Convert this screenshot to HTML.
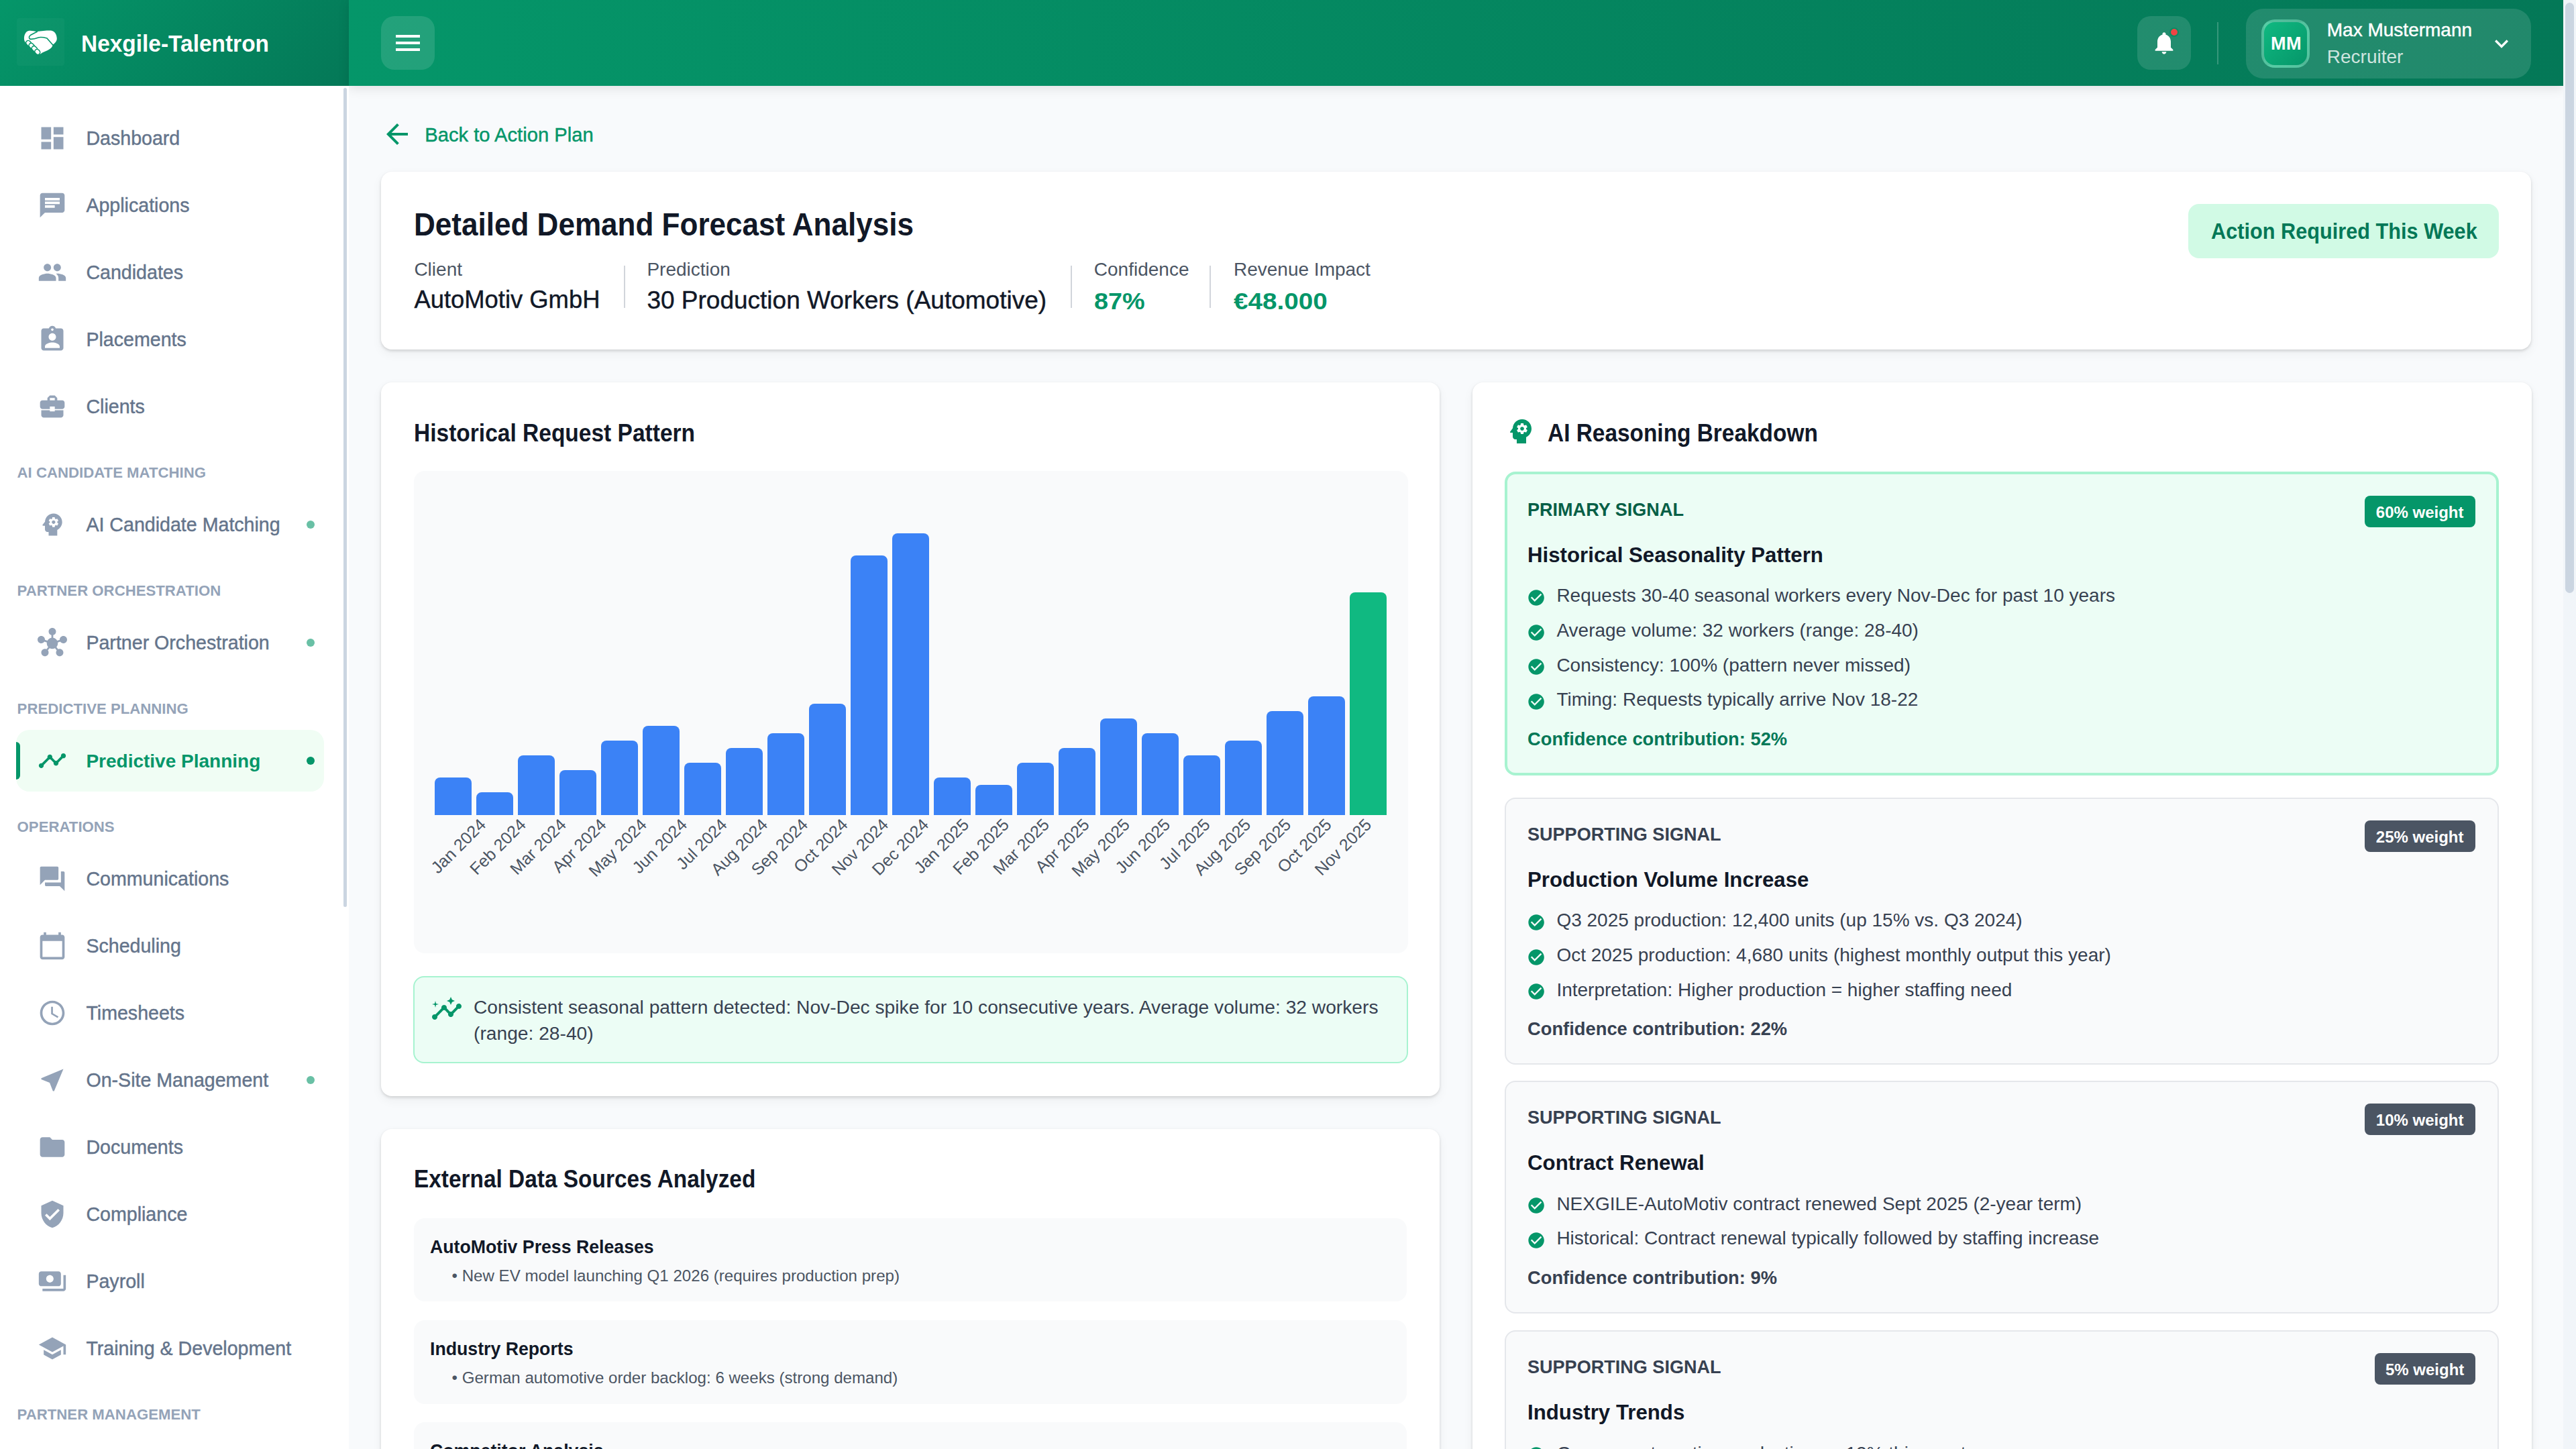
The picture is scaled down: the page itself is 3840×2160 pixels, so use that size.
<!DOCTYPE html>
<html><head><meta charset="utf-8"><title>Detailed Demand Forecast Analysis</title>
<style>
@media (min-width:2800px){html{zoom:2}}
html,body{margin:0;padding:0;overflow:hidden}
body{width:1920px;height:1080px;overflow:hidden;position:relative;background:#f8fafc;font-family:"Liberation Sans",sans-serif}
.a{position:absolute}
.t{position:absolute;white-space:nowrap;line-height:1}
</style></head><body>

<svg class="a" style="left:284.20px;top:88.00px;width:24px;height:24px;" viewBox="0 0 24 24" fill="#059669"><path d="M20 11H7.83l5.59-5.59L12 4l-8 8 8 8 1.41-1.41L7.83 13H20v-2z"/></svg>
<div class="t" style="left:316.60px;top:93.54px;font-size:14.6px;font-weight:400;color:#059669;-webkit-text-stroke:0.22px currentColor;">Back to Action Plan</div>
<div class="a" style="left:284.00px;top:128.00px;width:1602.30px;height:132.30px;background:#fff;border-radius:8px;box-shadow:0 1px 2px rgba(0,0,0,0.14),0 3px 8px rgba(0,0,0,0.05)"></div>
<div class="t" style="left:308.70px;top:155.68px;font-size:24px;font-weight:700;color:#111827;transform:scaleX(0.9176);transform-origin:0 0;">Detailed Demand Forecast Analysis</div>
<div class="t" style="left:308.70px;top:193.85px;font-size:14px;font-weight:400;color:#4b5563;">Client</div>
<div class="t" style="left:308.70px;top:214.69px;font-size:18.2px;font-weight:400;color:#111827;-webkit-text-stroke:0.22px currentColor;">AutoMotiv GmbH</div>
<div class="a" style="left:465.00px;top:197.80px;width:1.00px;height:31.60px;background:#d1d5db"></div>
<div class="t" style="left:482.20px;top:193.85px;font-size:14px;font-weight:400;color:#4b5563;">Prediction</div>
<div class="t" style="left:482.20px;top:214.44px;font-size:18.5px;font-weight:400;color:#111827;-webkit-text-stroke:0.22px currentColor;">30 Production Workers (Automotive)</div>
<div class="a" style="left:798.00px;top:197.80px;width:1.00px;height:31.60px;background:#d1d5db"></div>
<div class="t" style="left:815.40px;top:193.85px;font-size:14px;font-weight:400;color:#4b5563;">Confidence</div>
<div class="t" style="left:815.40px;top:215.84px;font-size:17.2px;font-weight:700;color:#059669;transform:scaleX(1.1);transform-origin:0 0;">87%</div>
<div class="a" style="left:901.50px;top:197.80px;width:1.00px;height:31.60px;background:#d1d5db"></div>
<div class="t" style="left:919.50px;top:193.85px;font-size:14px;font-weight:400;color:#4b5563;">Revenue Impact</div>
<div class="t" style="left:919.50px;top:215.84px;font-size:17.2px;font-weight:700;color:#059669;transform:scaleX(1.125);transform-origin:0 0;">€48.000</div>
<div class="a" style="left:1631.00px;top:152.00px;width:231.40px;height:40.30px;background:#d1fae5;border-radius:8px"></div>
<div class="t" style="left:1647.80px;top:163.61px;font-size:17px;font-weight:700;color:#047857;transform:scaleX(0.9026);transform-origin:0 0;">Action Required This Week</div>
<div class="a" style="left:284.00px;top:285.00px;width:789.00px;height:532.00px;background:#fff;border-radius:8px;box-shadow:0 1px 2px rgba(0,0,0,0.14),0 3px 8px rgba(0,0,0,0.05)"></div>
<div class="t" style="left:308.50px;top:313.76px;font-size:18px;font-weight:700;color:#111827;transform:scaleX(0.931);transform-origin:0 0;">Historical Request Pattern</div>
<div class="a" style="left:308.50px;top:351.00px;width:740.75px;height:359.50px;background:#f9fafb;border-radius:8px"></div>
<div class="a" style="left:324.00px;top:579.70px;width:27.25px;height:27.60px;background:#3b82f6;border-radius:4px 4px 0 0"></div>
<div class="a" style="left:355.01px;top:590.74px;width:27.25px;height:16.56px;background:#3b82f6;border-radius:4px 4px 0 0"></div>
<div class="a" style="left:386.02px;top:563.14px;width:27.25px;height:44.16px;background:#3b82f6;border-radius:4px 4px 0 0"></div>
<div class="a" style="left:417.03px;top:574.18px;width:27.25px;height:33.12px;background:#3b82f6;border-radius:4px 4px 0 0"></div>
<div class="a" style="left:448.04px;top:552.10px;width:27.25px;height:55.20px;background:#3b82f6;border-radius:4px 4px 0 0"></div>
<div class="a" style="left:479.05px;top:541.06px;width:27.25px;height:66.24px;background:#3b82f6;border-radius:4px 4px 0 0"></div>
<div class="a" style="left:510.06px;top:568.66px;width:27.25px;height:38.64px;background:#3b82f6;border-radius:4px 4px 0 0"></div>
<div class="a" style="left:541.07px;top:557.62px;width:27.25px;height:49.68px;background:#3b82f6;border-radius:4px 4px 0 0"></div>
<div class="a" style="left:572.08px;top:546.58px;width:27.25px;height:60.72px;background:#3b82f6;border-radius:4px 4px 0 0"></div>
<div class="a" style="left:603.09px;top:524.50px;width:27.25px;height:82.80px;background:#3b82f6;border-radius:4px 4px 0 0"></div>
<div class="a" style="left:634.10px;top:414.10px;width:27.25px;height:193.20px;background:#3b82f6;border-radius:4px 4px 0 0"></div>
<div class="a" style="left:665.11px;top:397.54px;width:27.25px;height:209.76px;background:#3b82f6;border-radius:4px 4px 0 0"></div>
<div class="a" style="left:696.12px;top:579.70px;width:27.25px;height:27.60px;background:#3b82f6;border-radius:4px 4px 0 0"></div>
<div class="a" style="left:727.13px;top:585.22px;width:27.25px;height:22.08px;background:#3b82f6;border-radius:4px 4px 0 0"></div>
<div class="a" style="left:758.14px;top:568.66px;width:27.25px;height:38.64px;background:#3b82f6;border-radius:4px 4px 0 0"></div>
<div class="a" style="left:789.15px;top:557.62px;width:27.25px;height:49.68px;background:#3b82f6;border-radius:4px 4px 0 0"></div>
<div class="a" style="left:820.16px;top:535.54px;width:27.25px;height:71.76px;background:#3b82f6;border-radius:4px 4px 0 0"></div>
<div class="a" style="left:851.17px;top:546.58px;width:27.25px;height:60.72px;background:#3b82f6;border-radius:4px 4px 0 0"></div>
<div class="a" style="left:882.18px;top:563.14px;width:27.25px;height:44.16px;background:#3b82f6;border-radius:4px 4px 0 0"></div>
<div class="a" style="left:913.19px;top:552.10px;width:27.25px;height:55.20px;background:#3b82f6;border-radius:4px 4px 0 0"></div>
<div class="a" style="left:944.20px;top:530.02px;width:27.25px;height:77.28px;background:#3b82f6;border-radius:4px 4px 0 0"></div>
<div class="a" style="left:975.21px;top:518.98px;width:27.25px;height:88.32px;background:#3b82f6;border-radius:4px 4px 0 0"></div>
<div class="a" style="left:1006.22px;top:441.70px;width:27.25px;height:165.60px;background:#10b981;border-radius:4px 4px 0 0"></div>
<div class="t lab" style="right:1564.80px;top:607.9px;font-size:12.5px;color:#4b5563;transform:rotate(-45deg);transform-origin:100% 0">Jan 2024</div>
<div class="t lab" style="right:1534.79px;top:607.9px;font-size:12.5px;color:#4b5563;transform:rotate(-45deg);transform-origin:100% 0">Feb 2024</div>
<div class="t lab" style="right:1504.77px;top:607.9px;font-size:12.5px;color:#4b5563;transform:rotate(-45deg);transform-origin:100% 0">Mar 2024</div>
<div class="t lab" style="right:1474.76px;top:607.9px;font-size:12.5px;color:#4b5563;transform:rotate(-45deg);transform-origin:100% 0">Apr 2024</div>
<div class="t lab" style="right:1444.74px;top:607.9px;font-size:12.5px;color:#4b5563;transform:rotate(-45deg);transform-origin:100% 0">May 2024</div>
<div class="t lab" style="right:1414.72px;top:607.9px;font-size:12.5px;color:#4b5563;transform:rotate(-45deg);transform-origin:100% 0">Jun 2024</div>
<div class="t lab" style="right:1384.71px;top:607.9px;font-size:12.5px;color:#4b5563;transform:rotate(-45deg);transform-origin:100% 0">Jul 2024</div>
<div class="t lab" style="right:1354.69px;top:607.9px;font-size:12.5px;color:#4b5563;transform:rotate(-45deg);transform-origin:100% 0">Aug 2024</div>
<div class="t lab" style="right:1324.68px;top:607.9px;font-size:12.5px;color:#4b5563;transform:rotate(-45deg);transform-origin:100% 0">Sep 2024</div>
<div class="t lab" style="right:1294.66px;top:607.9px;font-size:12.5px;color:#4b5563;transform:rotate(-45deg);transform-origin:100% 0">Oct 2024</div>
<div class="t lab" style="right:1264.65px;top:607.9px;font-size:12.5px;color:#4b5563;transform:rotate(-45deg);transform-origin:100% 0">Nov 2024</div>
<div class="t lab" style="right:1234.63px;top:607.9px;font-size:12.5px;color:#4b5563;transform:rotate(-45deg);transform-origin:100% 0">Dec 2024</div>
<div class="t lab" style="right:1204.62px;top:607.9px;font-size:12.5px;color:#4b5563;transform:rotate(-45deg);transform-origin:100% 0">Jan 2025</div>
<div class="t lab" style="right:1174.61px;top:607.9px;font-size:12.5px;color:#4b5563;transform:rotate(-45deg);transform-origin:100% 0">Feb 2025</div>
<div class="t lab" style="right:1144.59px;top:607.9px;font-size:12.5px;color:#4b5563;transform:rotate(-45deg);transform-origin:100% 0">Mar 2025</div>
<div class="t lab" style="right:1114.58px;top:607.9px;font-size:12.5px;color:#4b5563;transform:rotate(-45deg);transform-origin:100% 0">Apr 2025</div>
<div class="t lab" style="right:1084.56px;top:607.9px;font-size:12.5px;color:#4b5563;transform:rotate(-45deg);transform-origin:100% 0">May 2025</div>
<div class="t lab" style="right:1054.55px;top:607.9px;font-size:12.5px;color:#4b5563;transform:rotate(-45deg);transform-origin:100% 0">Jun 2025</div>
<div class="t lab" style="right:1024.53px;top:607.9px;font-size:12.5px;color:#4b5563;transform:rotate(-45deg);transform-origin:100% 0">Jul 2025</div>
<div class="t lab" style="right:994.52px;top:607.9px;font-size:12.5px;color:#4b5563;transform:rotate(-45deg);transform-origin:100% 0">Aug 2025</div>
<div class="t lab" style="right:964.50px;top:607.9px;font-size:12.5px;color:#4b5563;transform:rotate(-45deg);transform-origin:100% 0">Sep 2025</div>
<div class="t lab" style="right:934.48px;top:607.9px;font-size:12.5px;color:#4b5563;transform:rotate(-45deg);transform-origin:100% 0">Oct 2025</div>
<div class="t lab" style="right:904.47px;top:607.9px;font-size:12.5px;color:#4b5563;transform:rotate(-45deg);transform-origin:100% 0">Nov 2025</div>
<div class="a" style="left:308.20px;top:727.30px;width:741.30px;height:65.10px;background:#ecfdf5;border:1px solid #a7f3d0;border-radius:8px;box-sizing:border-box"></div>
<svg class="a" style="left:320.80px;top:740.00px;width:24px;height:24px;" viewBox="0 0 24 24" fill="#059669"><path d="M21 8c-1.45 0-2.26 1.44-1.93 2.51l-3.55 3.56c-.3-.09-.74-.09-1.04 0l-2.55-2.55C12.27 10.45 11.46 9 10 9c-1.45 0-2.27 1.44-1.93 2.52l-4.56 4.55C2.44 15.74 1 16.55 1 18c0 1.1.9 2 2 2 1.45 0 2.26-1.44 1.93-2.51l4.55-4.56c.3.09.74.09 1.04 0l2.55 2.55C12.73 16.55 13.54 18 15 18c1.45 0 2.27-1.44 1.93-2.52l3.56-3.55c1.07.33 2.51-.48 2.51-1.93 0-1.1-.9-2-2-2z"/><path d="M15 9l.94-2.07L18 6l-2.06-.93L15 3l-.92 2.07L12 6l2.08.93z"/><path d="M3.5 11L4 9l2-.5L4 8l-.5-2L3 8l-2 .5L3 9z"/></svg>
<div class="t" style="left:353.00px;top:743.46px;font-size:14.1px;font-weight:400;color:#374151;">Consistent seasonal pattern detected: Nov-Dec spike for 10 consecutive years. Average volume: 32 workers</div>
<div class="t" style="left:353.00px;top:763.16px;font-size:14.1px;font-weight:400;color:#374151;">(range: 28-40)</div>
<div class="a" style="left:284.00px;top:841.30px;width:789.00px;height:558.70px;background:#fff;border-radius:8px;box-shadow:0 1px 2px rgba(0,0,0,0.14),0 3px 8px rgba(0,0,0,0.05)"></div>
<div class="t" style="left:308.60px;top:870.16px;font-size:18px;font-weight:700;color:#111827;transform:scaleX(0.928);transform-origin:0 0;">External Data Sources Analyzed</div>
<div class="a" style="left:308.60px;top:907.80px;width:740.00px;height:62.40px;background:#f9fafb;border-radius:8px"></div>
<div class="t" style="left:320.40px;top:922.35px;font-size:14px;font-weight:700;color:#111827;transform:scaleX(0.953);transform-origin:0 0;">AutoMotiv Press Releases</div>
<div class="t" style="left:336.80px;top:945.10px;font-size:12.05px;font-weight:400;color:#4b5563;">&bull; New EV model launching Q1 2026 (requires production prep)</div>
<div class="a" style="left:308.60px;top:983.90px;width:740.00px;height:62.40px;background:#f9fafb;border-radius:8px"></div>
<div class="t" style="left:320.40px;top:998.45px;font-size:14px;font-weight:700;color:#111827;transform:scaleX(0.953);transform-origin:0 0;">Industry Reports</div>
<div class="t" style="left:336.80px;top:1021.20px;font-size:12.05px;font-weight:400;color:#4b5563;">&bull; German automotive order backlog: 6 weeks (strong demand)</div>
<div class="a" style="left:308.60px;top:1060.00px;width:740.00px;height:62.40px;background:#f9fafb;border-radius:8px"></div>
<div class="t" style="left:320.40px;top:1074.55px;font-size:14px;font-weight:700;color:#111827;transform:scaleX(0.953);transform-origin:0 0;">Competitor Analysis</div>
<div class="t" style="left:336.80px;top:1097.30px;font-size:12.05px;font-weight:400;color:#4b5563;">&bull; Competitor staffing agencies report high demand</div>
<div class="a" style="left:1097.60px;top:285.00px;width:789.40px;height:1115.00px;background:#fff;border-radius:8px;box-shadow:0 1px 2px rgba(0,0,0,0.14),0 3px 8px rgba(0,0,0,0.05)"></div>
<svg class="a" style="left:1121.30px;top:309.30px;width:24px;height:24px;" viewBox="0 0 24 24" fill="#059669"><path d="M13 8.57c-.79 0-1.43.64-1.43 1.43s.64 1.43 1.43 1.43 1.43-.64 1.43-1.43-.64-1.43-1.43-1.43z"/><path d="M13 3C9.25 3 6.2 5.94 6.02 9.64L4.1 12.2c-.25.33-.01.8.4.8H6v3c0 1.1.9 2 2 2h1v3h7v-4.68c2.36-1.12 4-3.530 4-6.32 0-3.87-3.13-7-7-7zm3 7c0 .13-.01.26-.02.39l.83.66c.08.06.1.16.05.25l-.8 1.39c-.05.09-.16.12-.24.09l-.99-.4c-.21.16-.43.29-.67.39L14 13.83c-.01.1-.1.17-.2.17h-1.6c-.1 0-.18-.07-.2-.17l-.15-1.06c-.25-.1-.47-.23-.68-.39l-.99.4c-.09.03-.2 0-.25-.09l-.8-1.39c-.05-.08-.03-.19.05-.25l.84-.66c-.01-.13-.02-.26-.02-.39s.02-.27.04-.39l-.85-.66c-.08-.06-.1-.16-.05-.26l.8-1.38c.05-.09.15-.12.24-.09l1 .4c.2-.15.43-.29.67-.39L12 6.17c.02-.1.1-.17.2-.17h1.6c.1 0 .18.07.2.17l.15 1.06c.24.1.46.23.67.39l1-.4c.09-.03.2 0 .24.09l.8 1.38c.05.09.03.2-.05.26l-.85.66c.03.12.04.25.04.39z"/></svg>
<div class="t" style="left:1153.70px;top:314.06px;font-size:18px;font-weight:700;color:#111827;transform:scaleX(0.928);transform-origin:0 0;">AI Reasoning Breakdown</div>
<div class="a" style="left:1121.70px;top:351.50px;width:740.70px;height:226.70px;background:#ecfdf5;border:2px solid #a7f3d0;border-radius:8px;box-sizing:border-box"></div>
<div class="t" style="left:1138.50px;top:373.05px;font-size:14px;font-weight:700;color:#065f46;transform:scaleX(0.966);transform-origin:0 0;">PRIMARY SIGNAL</div>
<div class="a" style="left:1762.70px;top:369.40px;width:82.30px;height:23.50px;background:#059669;border-radius:4px"></div>
<div class="t" style="left:1770.90px;top:375.84px;font-size:12px;font-weight:700;color:#fff;">60% weight</div>
<div class="t" style="left:1138.50px;top:405.56px;font-size:16px;font-weight:700;color:#111827;transform:scaleX(0.976);transform-origin:0 0;">Historical Seasonality Pattern</div>
<svg class="a" style="left:1138.15px;top:438.45px;width:14.1px;height:14.1px;" viewBox="0 0 24 24" fill="#059669"><path d="M12 2C6.48 2 2 6.48 2 12s4.48 10 10 10 10-4.48 10-10S17.52 2 12 2zm-2 15l-5-5 1.41-1.41L10 14.17l7.59-7.59L19 8l-9 9z"/></svg>
<div class="t" style="left:1160.20px;top:437.15px;font-size:14px;font-weight:400;color:#374151;">Requests 30-40 seasonal workers every Nov-Dec for past 10 years</div>
<svg class="a" style="left:1138.15px;top:464.25px;width:14.1px;height:14.1px;" viewBox="0 0 24 24" fill="#059669"><path d="M12 2C6.48 2 2 6.48 2 12s4.48 10 10 10 10-4.48 10-10S17.52 2 12 2zm-2 15l-5-5 1.41-1.41L10 14.17l7.59-7.59L19 8l-9 9z"/></svg>
<div class="t" style="left:1160.20px;top:462.95px;font-size:14px;font-weight:400;color:#374151;">Average volume: 32 workers (range: 28-40)</div>
<svg class="a" style="left:1138.15px;top:490.05px;width:14.1px;height:14.1px;" viewBox="0 0 24 24" fill="#059669"><path d="M12 2C6.48 2 2 6.48 2 12s4.48 10 10 10 10-4.48 10-10S17.52 2 12 2zm-2 15l-5-5 1.41-1.41L10 14.17l7.59-7.59L19 8l-9 9z"/></svg>
<div class="t" style="left:1160.20px;top:488.75px;font-size:14px;font-weight:400;color:#374151;">Consistency: 100% (pattern never missed)</div>
<svg class="a" style="left:1138.15px;top:515.85px;width:14.1px;height:14.1px;" viewBox="0 0 24 24" fill="#059669"><path d="M12 2C6.48 2 2 6.48 2 12s4.48 10 10 10 10-4.48 10-10S17.52 2 12 2zm-2 15l-5-5 1.41-1.41L10 14.17l7.59-7.59L19 8l-9 9z"/></svg>
<div class="t" style="left:1160.20px;top:514.55px;font-size:14px;font-weight:400;color:#374151;">Timing: Requests typically arrive Nov 18-22</div>
<div class="t" style="left:1138.50px;top:543.85px;font-size:14px;font-weight:700;color:#047857;transform:scaleX(0.976);transform-origin:0 0;">Confidence contribution: 52%</div>
<div class="a" style="left:1121.70px;top:594.50px;width:740.70px;height:198.90px;background:#f9fafb;border:1px solid #e5e7eb;border-radius:8px;box-sizing:border-box"></div>
<div class="t" style="left:1138.50px;top:615.05px;font-size:14px;font-weight:700;color:#374151;transform:scaleX(0.966);transform-origin:0 0;">SUPPORTING SIGNAL</div>
<div class="a" style="left:1762.70px;top:611.40px;width:82.30px;height:23.50px;background:#4b5563;border-radius:4px"></div>
<div class="t" style="left:1770.90px;top:617.84px;font-size:12px;font-weight:700;color:#fff;">25% weight</div>
<div class="t" style="left:1138.50px;top:647.56px;font-size:16px;font-weight:700;color:#111827;transform:scaleX(0.976);transform-origin:0 0;">Production Volume Increase</div>
<svg class="a" style="left:1138.15px;top:680.45px;width:14.1px;height:14.1px;" viewBox="0 0 24 24" fill="#059669"><path d="M12 2C6.48 2 2 6.48 2 12s4.48 10 10 10 10-4.48 10-10S17.52 2 12 2zm-2 15l-5-5 1.41-1.41L10 14.17l7.59-7.59L19 8l-9 9z"/></svg>
<div class="t" style="left:1160.20px;top:679.15px;font-size:14px;font-weight:400;color:#374151;">Q3 2025 production: 12,400 units (up 15% vs. Q3 2024)</div>
<svg class="a" style="left:1138.15px;top:706.25px;width:14.1px;height:14.1px;" viewBox="0 0 24 24" fill="#059669"><path d="M12 2C6.48 2 2 6.48 2 12s4.48 10 10 10 10-4.48 10-10S17.52 2 12 2zm-2 15l-5-5 1.41-1.41L10 14.17l7.59-7.59L19 8l-9 9z"/></svg>
<div class="t" style="left:1160.20px;top:704.95px;font-size:14px;font-weight:400;color:#374151;">Oct 2025 production: 4,680 units (highest monthly output this year)</div>
<svg class="a" style="left:1138.15px;top:732.05px;width:14.1px;height:14.1px;" viewBox="0 0 24 24" fill="#059669"><path d="M12 2C6.48 2 2 6.48 2 12s4.48 10 10 10 10-4.48 10-10S17.52 2 12 2zm-2 15l-5-5 1.41-1.41L10 14.17l7.59-7.59L19 8l-9 9z"/></svg>
<div class="t" style="left:1160.20px;top:730.75px;font-size:14px;font-weight:400;color:#374151;">Interpretation: Higher production = higher staffing need</div>
<div class="t" style="left:1138.50px;top:760.05px;font-size:14px;font-weight:700;color:#374151;transform:scaleX(0.976);transform-origin:0 0;">Confidence contribution: 22%</div>
<div class="a" style="left:1121.70px;top:805.60px;width:740.70px;height:173.30px;background:#f9fafb;border:1px solid #e5e7eb;border-radius:8px;box-sizing:border-box"></div>
<div class="t" style="left:1138.50px;top:826.15px;font-size:14px;font-weight:700;color:#374151;transform:scaleX(0.966);transform-origin:0 0;">SUPPORTING SIGNAL</div>
<div class="a" style="left:1762.70px;top:822.50px;width:82.30px;height:23.50px;background:#4b5563;border-radius:4px"></div>
<div class="t" style="left:1770.90px;top:828.94px;font-size:12px;font-weight:700;color:#fff;">10% weight</div>
<div class="t" style="left:1138.50px;top:858.66px;font-size:16px;font-weight:700;color:#111827;transform:scaleX(0.976);transform-origin:0 0;">Contract Renewal</div>
<svg class="a" style="left:1138.15px;top:891.55px;width:14.1px;height:14.1px;" viewBox="0 0 24 24" fill="#059669"><path d="M12 2C6.48 2 2 6.48 2 12s4.48 10 10 10 10-4.48 10-10S17.52 2 12 2zm-2 15l-5-5 1.41-1.41L10 14.17l7.59-7.59L19 8l-9 9z"/></svg>
<div class="t" style="left:1160.20px;top:890.25px;font-size:14px;font-weight:400;color:#374151;">NEXGILE-AutoMotiv contract renewed Sept 2025 (2-year term)</div>
<svg class="a" style="left:1138.15px;top:917.35px;width:14.1px;height:14.1px;" viewBox="0 0 24 24" fill="#059669"><path d="M12 2C6.48 2 2 6.48 2 12s4.48 10 10 10 10-4.48 10-10S17.52 2 12 2zm-2 15l-5-5 1.41-1.41L10 14.17l7.59-7.59L19 8l-9 9z"/></svg>
<div class="t" style="left:1160.20px;top:916.05px;font-size:14px;font-weight:400;color:#374151;">Historical: Contract renewal typically followed by staffing increase</div>
<div class="t" style="left:1138.50px;top:945.35px;font-size:14px;font-weight:700;color:#374151;transform:scaleX(0.976);transform-origin:0 0;">Confidence contribution: 9%</div>
<div class="a" style="left:1121.70px;top:991.60px;width:740.70px;height:308.40px;background:#f9fafb;border:1px solid #e5e7eb;border-radius:8px;box-sizing:border-box"></div>
<div class="t" style="left:1138.50px;top:1012.15px;font-size:14px;font-weight:700;color:#374151;transform:scaleX(0.966);transform-origin:0 0;">SUPPORTING SIGNAL</div>
<div class="a" style="left:1769.80px;top:1008.50px;width:75.20px;height:23.50px;background:#4b5563;border-radius:4px"></div>
<div class="t" style="left:1778.00px;top:1014.94px;font-size:12px;font-weight:700;color:#fff;">5% weight</div>
<div class="t" style="left:1138.50px;top:1044.66px;font-size:16px;font-weight:700;color:#111827;transform:scaleX(0.976);transform-origin:0 0;">Industry Trends</div>
<svg class="a" style="left:1138.15px;top:1077.55px;width:14.1px;height:14.1px;" viewBox="0 0 24 24" fill="#059669"><path d="M12 2C6.48 2 2 6.48 2 12s4.48 10 10 10 10-4.48 10-10S17.52 2 12 2zm-2 15l-5-5 1.41-1.41L10 14.17l7.59-7.59L19 8l-9 9z"/></svg>
<div class="t" style="left:1160.20px;top:1076.25px;font-size:14px;font-weight:400;color:#374151;">German automotive production up 12% this quarter</div>
<svg class="a" style="left:1138.15px;top:1103.35px;width:14.1px;height:14.1px;" viewBox="0 0 24 24" fill="#059669"><path d="M12 2C6.48 2 2 6.48 2 12s4.48 10 10 10 10-4.48 10-10S17.52 2 12 2zm-2 15l-5-5 1.41-1.41L10 14.17l7.59-7.59L19 8l-9 9z"/></svg>
<div class="t" style="left:1160.20px;top:1102.05px;font-size:14px;font-weight:400;color:#374151;">Manufacturing sector hiring index at 3-year high</div>
<div class="t" style="left:1138.50px;top:1131.35px;font-size:14px;font-weight:700;color:#374151;transform:scaleX(0.976);transform-origin:0 0;">Confidence contribution: 4%</div>
<div class="a" style="left:0.00px;top:0.00px;width:260.00px;height:64.00px;background:linear-gradient(135deg,#059669,#047857)"></div>
<div class="a" style="left:260.00px;top:0.00px;width:1650.50px;height:64.00px;background:linear-gradient(90deg,#059669,#047857);box-shadow:0 2px 8px rgba(0,0,0,0.1)"></div>
<div class="a" style="left:12.40px;top:13.50px;width:35.40px;height:35.50px;background:rgba(255,255,255,0.03);border-radius:2px"></div>
<svg class="a" style="left:10px;top:10px;width:40px;height:40px" viewBox="0 0 80 80"><path fill="#fff" d="M16,38.5 C15.6,32 18.5,26.5 23.5,25.8 C27,25.4 31,26.6 35,27 C42,26.2 50,25.4 56,25.6 C61,26 64.8,31.5 64.8,37.5 C64.8,41.5 61.5,45 58.3,46.8 C58.5,50 56,52.5 51,55 L43,58.5 C40.5,61 37.5,61.8 35,60.2 L20.5,46.5 C17.5,43.5 16.2,41 16,38.5 Z"/><path fill="none" stroke="#05966a" stroke-width="1.6" stroke-linecap="round" stroke-linejoin="round" d="M35.3,27.3 C31.5,29.3 27.5,31.2 25,32.8 C22.3,34.6 23.2,38.6 26.3,38.4 C30,38.2 33.5,37.4 36.5,36.2 C40,35 44,35.4 50,37 L58.3,46.6"/><g fill="#fff" stroke="#05966a" stroke-width="1.5"><rect x="-4.5" y="-3.4" width="9" height="6.8" rx="3.4" transform="translate(22.8,44.6) rotate(48)"/><rect x="-4.8" y="-3.4" width="9.6" height="6.8" rx="3.4" transform="translate(27.4,48.8) rotate(48)"/><rect x="-4.8" y="-3.4" width="9.6" height="6.8" rx="3.4" transform="translate(31.6,53) rotate(48)"/><rect x="-4.2" y="-3.4" width="8.4" height="6.8" rx="3.4" transform="translate(35.8,57.4) rotate(48)"/></g></svg>
<div class="t" style="left:60.50px;top:23.69px;font-size:17.5px;font-weight:700;color:#fff;transform:scaleX(0.9556);transform-origin:0 0;">Nexgile-Talentron</div>
<div class="a" style="left:284.00px;top:12.00px;width:40.00px;height:40.00px;background:rgba(255,255,255,0.12);border-radius:10px"></div>
<svg class="a" style="left:292.00px;top:20.00px;width:24px;height:24px;" viewBox="0 0 24 24" fill="#fff"><path d="M3 18h18v-2H3v2zm0-5h18v-2H3v2zm0-7v2h18V6H3z"/></svg>
<div class="a" style="left:1592.80px;top:12.00px;width:40.00px;height:40.00px;background:rgba(255,255,255,0.12);border-radius:10px"></div>
<svg class="a" style="left:1602.80px;top:22.00px;width:20px;height:20px;" viewBox="0 0 24 24" fill="#fff"><path d="M12 22c1.1 0 2-.9 2-2h-4c0 1.1.89 2 2 2zm6-6v-5c0-3.07-1.64-5.64-4.5-6.32V4c0-.83-.67-1.5-1.5-1.5s-1.5.67-1.5 1.5v.68C7.63 5.36 6 7.92 6 11v5l-2 2v1h16v-1l-2-2z"/></svg>
<div class="a" style="left:1617.10px;top:20.40px;width:7.00px;height:7.00px;background:#ef4444;border:1px solid #0a8a62;box-sizing:border-box;border-radius:50%"></div>
<div class="a" style="left:1652.50px;top:16.40px;width:1.00px;height:31.70px;background:rgba(255,255,255,0.2)"></div>
<div class="a" style="left:1674.00px;top:6.50px;width:212.30px;height:51.80px;background:rgba(255,255,255,0.12);border-radius:13px"></div>
<div class="a" style="left:1685.60px;top:14.50px;width:35.80px;height:35.80px;background:linear-gradient(135deg,#10b981,#059669);border:2px solid rgba(255,255,255,0.3);border-radius:10px;box-sizing:border-box"></div>
<div class="t" style="left:1692.50px;top:25.49px;font-size:13.6px;font-weight:700;color:#fff;letter-spacing:0.2px;">MM</div>
<div class="t" style="left:1734.40px;top:15.55px;font-size:14px;font-weight:400;color:#fff;-webkit-text-stroke:0.22px currentColor;">Max Mustermann</div>
<div class="t" style="left:1734.40px;top:35.65px;font-size:14px;font-weight:400;color:rgba(255,255,255,0.8);">Recruiter</div>
<svg class="a" style="left:1854.40px;top:22.50px;width:20px;height:20px;" viewBox="0 0 24 24" fill="#fff"><path d="M16.59 8.59L12 13.17 7.41 8.59 6 10l6 6 6-6z"/></svg>
<div class="a" style="left:1910.50px;top:0.00px;width:9.50px;height:1080.00px;background:#f1f5f9"></div>
<div class="a" style="left:1912.00px;top:2.00px;width:6.40px;height:440.20px;background:#cbd5e1;border-radius:4px"></div>
<div class="a" style="left:0.00px;top:64.00px;width:260.00px;height:1016.00px;background:#fff"></div>
<div class="a" style="left:256.00px;top:65.50px;width:2.60px;height:610.50px;background:#cbd5e1;border-radius:2px"></div>
<svg class="a" style="left:28.00px;top:92.00px;width:22px;height:22px;" viewBox="0 0 24 24" fill="#94a3b8"><path d="M3 13h8V3H3v10zm0 8h8v-6H3v6zm10 0h8V11h-8v10zm0-18v6h8V3h-8z"/></svg>
<div class="t" style="left:64.20px;top:96.10px;font-size:14.3px;font-weight:400;color:#64748b;-webkit-text-stroke:0.22px currentColor;">Dashboard</div>
<svg class="a" style="left:28.00px;top:142.00px;width:22px;height:22px;" viewBox="0 0 24 24" fill="#94a3b8"><path d="M20 2H4c-1.1 0-1.99.9-1.99 2L2 22l4-4h14c1.1 0 2-.9 2-2V4c0-1.1-.9-2-2-2zM6 9h12v2H6V9zm8 5H6v-2h8v2zm4-6H6V6h12v2z"/></svg>
<div class="t" style="left:64.20px;top:146.10px;font-size:14.3px;font-weight:400;color:#64748b;-webkit-text-stroke:0.22px currentColor;">Applications</div>
<svg class="a" style="left:28.00px;top:192.00px;width:22px;height:22px;" viewBox="0 0 24 24" fill="#94a3b8"><path d="M16 11c1.66 0 2.99-1.34 2.99-3S17.66 5 16 5c-1.66 0-3 1.34-3 3s1.34 3 3 3zm-8 0c1.66 0 2.99-1.34 2.99-3S9.66 5 8 5C6.34 5 5 6.34 5 8s1.34 3 3 3zm0 2c-2.33 0-7 1.17-7 3.5V19h14v-2.5c0-2.33-4.67-3.5-7-3.5zm8 0c-.29 0-.62.02-.97.05 1.16.84 1.970 1.97 1.97 3.45V19h6v-2.5c0-2.33-4.67-3.5-7-3.5z"/></svg>
<div class="t" style="left:64.20px;top:196.10px;font-size:14.3px;font-weight:400;color:#64748b;-webkit-text-stroke:0.22px currentColor;">Candidates</div>
<svg class="a" style="left:28.00px;top:242.00px;width:22px;height:22px;" viewBox="0 0 24 24" fill="#94a3b8"><path d="M19 3h-4.18C14.4 1.84 13.3 1 12 1c-1.3 0-2.4.84-2.82 2H5c-1.1 0-2 .9-2 2v14c0 1.1.9 2 2 2h14c1.1 0 2-.9 2-2V5c0-1.1-.9-2-2-2zm-7 0c.55 0 1 .45 1 1s-.45 1-1 1-1-.45-1-1 .45-1 1-1zm0 4c1.66 0 3 1.34 3 3s-1.34 3-3 3-3-1.34-3-3 1.34-3 3-3zm6 12H6v-1.4c0-2 4-3.1 6-3.1s6 1.1 6 3.1V19z"/></svg>
<div class="t" style="left:64.20px;top:246.10px;font-size:14.3px;font-weight:400;color:#64748b;-webkit-text-stroke:0.22px currentColor;">Placements</div>
<svg class="a" style="left:28.00px;top:292.00px;width:22px;height:22px;" viewBox="0 0 24 24" fill="#94a3b8"><path d="M10 16v-1H3.01L3 19c0 1.11.89 2 2 2h14c1.11 0 2-.89 2-2v-4h-7v1h-4zm10-9h-4.01V5l-2-2h-4l-2 2v2H4c-1.1 0-2 .9-2 2v3c0 1.11.89 2 2 2h6v-2h4v2h6c1.1 0 2-.9 2-2V9c0-1.1-.9-2-2-2zm-6 0h-4V5h4v2z"/></svg>
<div class="t" style="left:64.20px;top:296.10px;font-size:14.3px;font-weight:400;color:#64748b;-webkit-text-stroke:0.22px currentColor;">Clients</div>
<div class="t" style="left:12.80px;top:346.80px;font-size:11.1px;font-weight:700;color:#94a3b8;">AI CANDIDATE MATCHING</div>
<svg class="a" style="left:28.00px;top:380.00px;width:22px;height:22px;" viewBox="0 0 24 24" fill="#94a3b8"><path d="M13 8.57c-.79 0-1.43.64-1.43 1.43s.64 1.43 1.43 1.43 1.43-.64 1.43-1.43-.64-1.43-1.43-1.43z"/><path d="M13 3C9.25 3 6.2 5.94 6.02 9.64L4.1 12.2c-.25.33-.01.8.4.8H6v3c0 1.1.9 2 2 2h1v3h7v-4.68c2.36-1.12 4-3.530 4-6.32 0-3.87-3.13-7-7-7zm3 7c0 .13-.01.26-.02.39l.83.66c.08.06.1.16.05.25l-.8 1.39c-.05.09-.16.12-.24.09l-.99-.4c-.21.16-.43.29-.67.39L14 13.83c-.01.1-.1.17-.2.17h-1.6c-.1 0-.18-.07-.2-.17l-.15-1.06c-.25-.1-.47-.23-.68-.39l-.99.4c-.09.03-.2 0-.25-.09l-.8-1.39c-.05-.08-.03-.19.05-.25l.84-.66c-.01-.13-.02-.26-.02-.39s.02-.27.04-.39l-.85-.66c-.08-.06-.1-.16-.05-.26l.8-1.38c.05-.09.15-.12.24-.09l1 .4c.2-.15.43-.29.67-.39L12 6.17c.02-.1.1-.17.2-.17h1.6c.1 0 .18.07.2.17l.15 1.06c.24.1.46.23.67.39l1-.4c.09-.03.2 0 .24.09l.8 1.38c.05.09.03.2-.05.26l-.85.66c.03.12.04.25.04.39z"/></svg>
<div class="t" style="left:64.20px;top:384.10px;font-size:14.3px;font-weight:400;color:#64748b;-webkit-text-stroke:0.22px currentColor;">AI Candidate Matching</div>
<div class="a" style="left:228.40px;top:388.00px;width:6.00px;height:6.00px;background:#69c0a5;border-radius:50%"></div>
<div class="t" style="left:12.80px;top:434.80px;font-size:11.1px;font-weight:700;color:#94a3b8;">PARTNER ORCHESTRATION</div>
<svg class="a" style="left:28.00px;top:468.00px;width:22px;height:22px;" viewBox="0 0 24 24" fill="#94a3b8"><path d="M8.4 18.2c.38.5.6 1.12.6 1.8 0 1.66-1.34 3-3 3s-3-1.34-3-3 1.34-3 3-3c.44 0 .85.09 1.23.26l1.41-1.77c-.92-1.03-1.29-2.39-1.09-3.69l-2.030-.68c-.54.83-1.46 1.38-2.52 1.38-1.66 0-3-1.34-3-3s1.34-3 3-3 3 1.34 3 3c0 .07 0 .14-.01.21l2.03.68c.64-1.21 1.82-2.09 3.22-2.32V5.91C9.96 5.57 9 4.4 9 3c0-1.66 1.34-3 3-3s3 1.34 3 3c0 1.4-.96 2.57-2.25 2.91v2.16c1.4.23 2.58 1.11 3.22 2.32l2.03-.68c-.01-.07-.01-.14-.01-.21 0-1.66 1.34-3 3-3s3 1.34 3 3-1.34 3-3 3c-1.06 0-1.98-.55-2.52-1.37l-2.03.68c.2 1.29-.16 2.65-1.09 3.69l1.41 1.77c.38-.17.79-.26 1.23-.26 1.66 0 3 1.34 3 3s-1.34 3-3 3-3-1.34-3-3c0-.68.22-1.3.6-1.8l-1.41-1.77c-1.35.75-3.01.76-4.37 0L8.4 18.2z"/></svg>
<div class="t" style="left:64.20px;top:472.10px;font-size:14.3px;font-weight:400;color:#64748b;-webkit-text-stroke:0.22px currentColor;">Partner Orchestration</div>
<div class="a" style="left:228.40px;top:476.00px;width:6.00px;height:6.00px;background:#69c0a5;border-radius:50%"></div>
<div class="t" style="left:12.80px;top:522.80px;font-size:11.1px;font-weight:700;color:#94a3b8;">PREDICTIVE PLANNING</div>
<div class="a" style="left:12.00px;top:544.00px;width:229.50px;height:46.00px;background:#f0fdf4;border-radius:10px"></div>
<div class="a" style="left:12.00px;top:553.00px;width:3.00px;height:28.00px;background:#059669;border-radius:0 3px 3px 0"></div>
<svg class="a" style="left:28.00px;top:556.00px;width:22px;height:22px;" viewBox="0 0 24 24" fill="#059669"><path d="M23 8c0 1.1-.9 2-2 2-.18 0-.35-.02-.51-.07l-3.56 3.55c.05.16.07.34.07.52 0 1.1-.9 2-2 2s-2-.9-2-2c0-.18.02-.36.07-.52l-2.55-2.55c-.16.05-.34.07-.52.07s-.36-.02-.52-.07l-4.55 4.56c.05.16.07.33.07.51 0 1.1-.9 2-2 2s-2-.9-2-2 .9-2 2-2c.18 0 .35.02.51.07l4.56-4.55C8.020 9.36 8 9.18 8 9c0-1.1.9-2 2-2s2 .9 2 2c0 .18-.02.36-.07.52l2.55 2.55c.16-.05.34-.07.52-.07s.36.02.52.07l3.55-3.56C19.02 8.35 19 8.18 19 8c0-1.1.9-2 2-2s2 .9 2 2z"/></svg>
<div class="t" style="left:64.20px;top:560.35px;font-size:14.0px;font-weight:700;color:#059669;">Predictive Planning</div>
<div class="a" style="left:228.40px;top:564.00px;width:6.00px;height:6.00px;background:#059669;border-radius:50%"></div>
<div class="t" style="left:12.80px;top:610.80px;font-size:11.1px;font-weight:700;color:#94a3b8;">OPERATIONS</div>
<svg class="a" style="left:28.00px;top:644.00px;width:22px;height:22px;" viewBox="0 0 24 24" fill="#94a3b8"><path d="M21 6h-2v9H6v2c0 .55.45 1 1 1h11l4 4V7c0-.55-.45-1-1-1zm-4 6V3c0-.55-.45-1-1-1H3c-.55 0-1 .45-1 1v14l4-4h10c.55 0 1-.45 1-1z"/></svg>
<div class="t" style="left:64.20px;top:648.10px;font-size:14.3px;font-weight:400;color:#64748b;-webkit-text-stroke:0.22px currentColor;">Communications</div>
<svg class="a" style="left:28.00px;top:694.00px;width:22px;height:22px;" viewBox="0 0 24 24" fill="#94a3b8"><path d="M20 3h-1V1h-2v2H7V1H5v2H4c-1.1 0-2 .9-2 2v16c0 1.1.9 2 2 2h16c1.1 0 2-.9 2-2V5c0-1.1-.9-2-2-2zm0 18H4V8h16v13z"/></svg>
<div class="t" style="left:64.20px;top:698.10px;font-size:14.3px;font-weight:400;color:#64748b;-webkit-text-stroke:0.22px currentColor;">Scheduling</div>
<svg class="a" style="left:28.00px;top:744.00px;width:22px;height:22px;" viewBox="0 0 24 24" fill="#94a3b8"><path d="M11.99 2C6.47 2 2 6.48 2 12s4.47 10 9.99 10C17.52 22 22 17.52 22 12S17.52 2 11.99 2zM12 20c-4.42 0-8-3.58-8-8s3.58-8 8-8 8 3.58 8 8-3.58 8-8 8zm.5-13H11v6l5.25 3.15.75-1.23-4.5-2.67z"/></svg>
<div class="t" style="left:64.20px;top:748.10px;font-size:14.3px;font-weight:400;color:#64748b;-webkit-text-stroke:0.22px currentColor;">Timesheets</div>
<svg class="a" style="left:28.00px;top:794.00px;width:22px;height:22px;" viewBox="0 0 24 24" fill="#94a3b8"><path d="M21 3L3 10.53v.98l6.84 2.65L12.48 21h.98L21 3z"/></svg>
<div class="t" style="left:64.20px;top:798.10px;font-size:14.3px;font-weight:400;color:#64748b;-webkit-text-stroke:0.22px currentColor;">On-Site Management</div>
<div class="a" style="left:228.40px;top:802.00px;width:6.00px;height:6.00px;background:#69c0a5;border-radius:50%"></div>
<svg class="a" style="left:28.00px;top:844.00px;width:22px;height:22px;" viewBox="0 0 24 24" fill="#94a3b8"><path d="M10 4H4c-1.1 0-1.99.9-1.99 2L2 18c0 1.1.9 2 2 2h16c1.1 0 2-.9 2-2V8c0-1.1-.9-2-2-2h-8l-2-2z"/></svg>
<div class="t" style="left:64.20px;top:848.10px;font-size:14.3px;font-weight:400;color:#64748b;-webkit-text-stroke:0.22px currentColor;">Documents</div>
<svg class="a" style="left:28.00px;top:894.00px;width:22px;height:22px;" viewBox="0 0 24 24" fill="#94a3b8"><path d="M12 1L3 5v6c0 5.55 3.84 10.74 9 12 5.16-1.26 9-6.45 9-12V5l-9-4zm-2 16l-4-4 1.41-1.41L10 14.17l6.59-6.59L18 9l-8 8z"/></svg>
<div class="t" style="left:64.20px;top:898.10px;font-size:14.3px;font-weight:400;color:#64748b;-webkit-text-stroke:0.22px currentColor;">Compliance</div>
<svg class="a" style="left:28.00px;top:944.00px;width:22px;height:22px;" viewBox="0 0 24 24" fill="#94a3b8"><path d="M19 14V6c0-1.1-.9-2-2-2H3c-1.1 0-2 .9-2 2v8c0 1.1.9 2 2 2h14c1.1 0 2-.9 2-2zm-9-1c-1.66 0-3-1.34-3-3s1.34-3 3-3 3 1.34 3 3-1.34 3-3 3zm13-6v11c0 1.1-.9 2-2 2H4v-2h17V7h2z"/></svg>
<div class="t" style="left:64.20px;top:948.10px;font-size:14.3px;font-weight:400;color:#64748b;-webkit-text-stroke:0.22px currentColor;">Payroll</div>
<svg class="a" style="left:28.00px;top:994.00px;width:22px;height:22px;" viewBox="0 0 24 24" fill="#94a3b8"><path d="M5 13.18v4L12 21l7-3.82v-4L12 17l-7-3.82zM12 3L1 9l11 6 9-4.91V17h2V9L12 3z"/></svg>
<div class="t" style="left:64.20px;top:998.10px;font-size:14.3px;font-weight:400;color:#64748b;-webkit-text-stroke:0.22px currentColor;">Training &amp; Development</div>
<div class="t" style="left:12.80px;top:1048.80px;font-size:11.1px;font-weight:700;color:#94a3b8;">PARTNER MANAGEMENT</div>
</body></html>
